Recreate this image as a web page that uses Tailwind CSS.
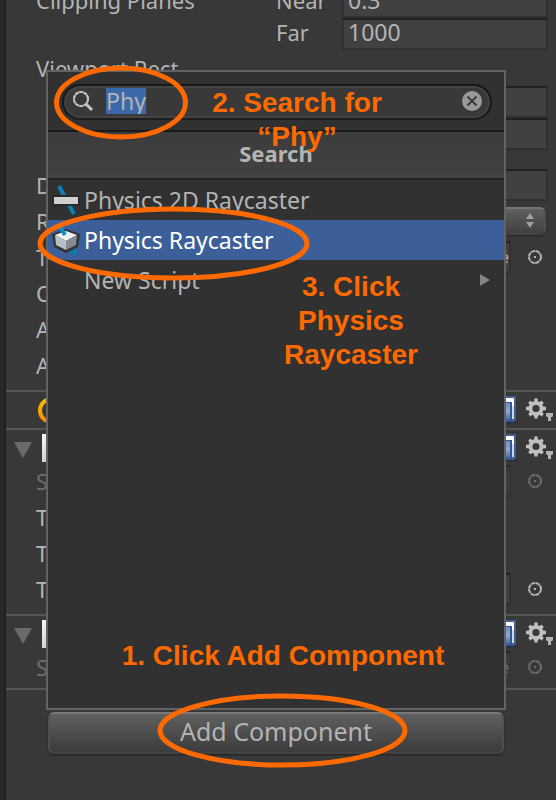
<!DOCTYPE html>
<html lang="en">
<head>
<meta charset="utf-8">
<meta name="viewport" content="width=device-width, initial-scale=1">
<title>Inspector</title>
<script src="https://cdn.jsdelivr.net/npm/@tailwindcss/browser@4"></script>
</head>
<body class="bg-[#383838] text-[#b4b4b4] text-[22px] leading-8 font-['Noto_Sans','Open_Sans',sans-serif]">
<svg class="absolute size-0" aria-hidden="true">
  <defs>
    <linearGradient id="bookFill" x1="0" y1="0" x2="0" y2="1"><stop offset="0" stop-color="#6f8fc0"/><stop offset=".5" stop-color="#8ea9d2"/><stop offset="1" stop-color="#42659f"/></linearGradient>
    <linearGradient id="ringFill" x1="0" y1="0" x2="0" y2="1"><stop offset="0" stop-color="#ffc000"/><stop offset="1" stop-color="#ff8a00"/></linearGradient>
    <linearGradient id="pageFill" x1="0" y1="0" x2="1" y2="1"><stop offset="0" stop-color="#f4f8fb"/><stop offset="1" stop-color="#a9b8c4"/></linearGradient>
    <symbol id="gear" viewBox="0 0 28 24">
      <circle cx="10" cy="10.500" r="5.600" fill="none" stroke="#c0c0c0" stroke-width="4"/>
      <path d="M10 .5v4M10 16.500v4M0 10.500h4M16 10.500h4M3.300 3.800l3 3M13.700 14.200l3 3M16.700 3.800l-3 3M6.300 14.200l-3 3" stroke="#c0c0c0" stroke-width="3.400"/>
      <path d="M20 15h7v3l-1 1h-1v4h-3v-4h-1l-1-1z" fill="#b4b4b4"/>
    </symbol>
    <symbol id="book" viewBox="0 0 28 28">
      <path d="M2 3h26v24H2z" fill="#252b36"/><path d="M2 0h26v24l-2 2H2z" fill="#3f5f96"/>
      <path d="M3 2h23v21h-2V6H3z" fill="#fff"/><path d="M24 10h2v13h-2z" fill="#cfd8e6"/>
      <path d="M3 6h21v20H3z" fill="#36568e"/><path d="M4 7h18v17H4z" fill="url(#bookFill)"/>
    </symbol>
    <symbol id="target" viewBox="0 0 16 16">
      <circle cx="8" cy="8" r="6" fill="none" stroke="currentColor" stroke-width="2" stroke-dasharray="4.200 .512"/>
      <path d="M7 7h2v2H7z" fill="currentColor"/>
    </symbol>
    <symbol id="page" viewBox="0 0 28 28"><path d="M0 0h28v28H0z" fill="url(#pageFill)"/></symbol>
  </defs>
</svg>

<div class="relative flex min-h-screen overflow-hidden">
  <div class="w-1.5 shrink-0 border-r-2 border-[#202020] bg-[#292929]"></div>

  <main class="min-w-0 flex-1">
    <section class="-mt-3.5 pb-[7px] pl-[30px] pr-2">
      <div class="flex h-8 items-center">
        <span class="w-60 pb-1">Clipping Planes</span>
        <label for="near" class="w-[66px] pb-1">Near</label>
        <input id="near" value="0.3" class="h-8 min-w-0 flex-1 border-2 border-[#303030] border-t-[#212121] bg-[#414141] px-1 pb-1 text-[23px] outline-none">
      </div>
      <div class="flex h-8 items-center">
        <label for="far" class="ml-60 w-[66px] pb-1">Far</label>
        <input id="far" value="1000" class="h-8 min-w-0 flex-1 border-2 border-[#303030] border-t-[#212121] bg-[#414141] px-1 pb-1 text-[23px] outline-none">
      </div>
      <div class="flex h-9 items-center">Viewport Rect</div>
      <div class="ml-60 h-8 border-2 border-[#303030] border-t-[#212121] bg-[#414141]"></div>
      <div class="mb-[17px] ml-60 h-8 border-2 border-[#303030] border-t-[#212121] bg-[#414141]"></div>
      <div class="flex h-9 items-center"><label for="depth" class="w-60">Depth</label><input id="depth" class="h-8 min-w-0 flex-1 border-2 border-[#303030] border-t-[#212121] bg-[#414141]"></div>
      <div class="flex h-9 items-center"><span class="w-60">Rendering</span>
        <button aria-label="Rendering path" class="mr-0.5 flex h-7 flex-1 items-center justify-end rounded-md border-2 border-[#505050] border-t-[#757575] border-b-[#434343] bg-linear-to-b from-[#606060] to-[#404040] pr-2 shadow-[0_1px_2px_#222]">
          <svg class="h-4 w-3" viewBox="0 0 12 16" fill="#a0a0a0"><path d="M6 0l4 6H2zM2 9h8l-4 6z"/></svg>
        </button>
      </div>
      <div class="flex h-9 items-center"><span class="w-60">Target</span><div class="h-8 flex-1 border-2 border-[#303030] border-t-[#212121] bg-[#414141] text-right text-base leading-7">e</div><svg class="ml-4 mr-[5px] size-4"><use href="#target"/></svg></div>
      <div class="flex h-9 items-center">Occlusion</div>
      <div class="flex h-9 items-center">Allow HDR</div>
      <div class="flex h-9 items-center">Allow</div>
    </section>

    <section class="flex h-10 items-center border-y-2 border-[#555] pl-8 pr-0.5">
      <svg class="size-[27px]" viewBox="0 0 27 27"><circle cx="13.500" cy="13.500" r="11.500" fill="none" stroke="url(#ringFill)" stroke-width="4"/></svg>
      <svg class="ml-auto mr-2.5 size-7"><use href="#book"/></svg><svg class="h-6 w-7"><use href="#gear"/></svg>
    </section>

    <section class="border-b-2 border-[#555] pb-[7px]">
      <div class="flex h-9 items-center pl-2 pr-0.5">
        <svg class="mr-2.5 mt-1 h-4 w-[18px]" viewBox="0 0 18 16"><path d="M0 0h18L9 16z" fill="#6a6a6a"/></svg>
        <svg class="size-7"><use href="#page"/></svg>
        <svg class="ml-auto mr-2.5 size-7"><use href="#book"/></svg><svg class="h-6 w-7"><use href="#gear"/></svg>
      </div>
      <div class="-mt-[3px] flex h-9 items-center pl-[30px] pr-2 text-[#6e6e6e]"><span class="w-60">Script</span><div class="h-8 flex-1 border-2 border-[#343434] border-t-[#292929] bg-[#3c3c3c]"></div><svg class="ml-4 mr-[5px] size-4"><use href="#target"/></svg></div>
      <div class="flex h-9 items-center pl-[30px]">Time</div>
      <div class="flex h-9 items-center pl-[30px]">Threshold</div>
      <div class="flex h-9 items-center pl-[30px] pr-2"><span class="w-60">Target</span><div class="h-8 flex-1 border-2 border-[#303030] border-t-[#212121] bg-[#414141]"></div><svg class="ml-4 mr-[5px] size-4"><use href="#target"/></svg></div>
    </section>

    <section class="border-b-2 border-[#555] pb-[3px]">
      <div class="flex h-9 items-center pl-2 pr-0.5">
        <svg class="mr-2.5 mt-1 h-4 w-[18px]" viewBox="0 0 18 16"><path d="M0 0h18L9 16z" fill="#6a6a6a"/></svg>
        <svg class="size-7"><use href="#page"/></svg>
        <svg class="ml-auto mr-2.5 size-7"><use href="#book"/></svg><svg class="h-6 w-7"><use href="#gear"/></svg>
      </div>
      <div class="-mt-[3px] flex h-9 items-center pl-[30px] pr-2 text-[#6e6e6e]"><span class="w-60">Script</span><div class="h-8 flex-1 border-2 border-[#343434] border-t-[#292929] bg-[#3c3c3c] text-right text-base leading-7">e</div><svg class="ml-4 mr-[5px] size-4"><use href="#target"/></svg></div>
    </section>

    <div class="pl-[42px] pr-[52px] pt-[22px]">
      <button class="h-[42px] w-full rounded-md border-2 border-[#505050] border-t-[#787878] border-b-[#434343] bg-linear-to-b from-[#606060] to-[#3c3c3c] pb-1 text-[25px] leading-8 shadow-[0_1px_2px_#202020]">Add Component</button>
    </div>
  </main>

  <!-- Component picker -->
  <div class="absolute left-[46px] right-[50px] top-[70px] h-[640px] border-2 border-[#636363] bg-[#313131]">
    <div class="h-[60px] border-b-2 border-[#1a1a1a] pl-3.5 pr-3 pt-3">
      <label class="flex h-9 items-center rounded-full border-2 border-[#181818] border-b-[#1e1e1e] bg-[#393939] px-2 pb-0.5 shadow-[inset_0_0_0_2px_#444]">
        <svg class="mr-3 size-[22px] shrink-0" viewBox="0 0 22 22" fill="none" stroke="#c4c4c4"><circle cx="9" cy="9" r="7" stroke-width="2.200" stroke-dasharray="4 .4"/><path d="M14 14l6 6" stroke-width="3"/></svg>
        <input id="query" aria-label="Search components" value="Phy" class="h-[26px] min-w-0 flex-1 bg-transparent text-[23px] leading-[26px] caret-transparent outline-none selection:bg-[#3d69ae]/99 selection:text-[#b4b4b4]">
        <button aria-label="Clear search"><svg class="size-5" viewBox="0 0 20 20"><circle cx="10" cy="10" r="10" fill="#999"/><path d="M5.500 5.500l9 9M14.500 5.500l-9 9" stroke="#3c3c3c" stroke-width="2"/></svg></button>
      </label>
    </div>
    <h2 class="flex h-12 items-center justify-center border-b-2 border-[#222] bg-linear-to-b from-[#3c3c3c] to-[#424242] pb-1 font-bold">Search</h2>
    <ul class="text-[23px]">
      <li><a href="#" class="flex h-10 items-center pl-1">
        <svg class="mr-1 h-8 w-7 shrink-0" viewBox="0 0 28 32"><path d="M7 2l15 28" stroke="#0b82b5" stroke-width="4"/><path d="M0 11h28v11H0z" fill="#292929"/><path d="M2 13h24v7H2z" fill="#d0d0d0"/></svg>
        Physics 2D Raycaster</a></li>
      <li><a href="#" class="flex h-10 items-center bg-[#3d5f99] pl-1 text-white">
        <svg class="mr-1 h-8 w-7 shrink-0" viewBox="0 0 28 32"><path d="M17 21l7 10" stroke="#087caf" stroke-width="5"/><path d="M0 10l14-5 14 5-2 13-12 6-12-6z" fill="#303437"/><path d="M3 11l11-4 11 4-11 6z" fill="#f0f1f3"/><path d="M3 11l11 6v9L4 21z" fill="#b9c0c7"/><path d="M25 11l-11 6v9l10-5z" fill="#858c94"/><path d="M7 1l6 10" stroke="#0b8fc8" stroke-width="4"/></svg>
        Physics Raycaster</a></li>
      <li><a href="#" class="flex h-10 items-center justify-between pl-9 pr-3.5">New Script
        <svg class="h-3 w-2.5" viewBox="0 0 10 12"><path d="M0 0l10 6-10 6z" fill="#858585"/></svg></a></li>
    </ul>
  </div>

  <!-- Tutorial callouts drawn over the panel -->
  <div class="pointer-events-none absolute inset-0 text-center text-[28px] leading-[34px] font-bold text-[#ff6a00] font-['Liberation_Sans',Arial,sans-serif]">
    <svg class="absolute left-0 top-0 h-[800px] w-[556px]" viewBox="0 0 556 800" fill="none" stroke="#ff6a00" stroke-width="5">
      <ellipse cx="121" cy="102.500" rx="64.500" ry="34.500"/><ellipse cx="173.500" cy="243.500" rx="133.500" ry="34.500"/><ellipse cx="282.500" cy="730.500" rx="122.500" ry="34.500"/>
    </svg>
    <p class="absolute left-[207px] top-[86px] w-[180px]">2. Search for “Phy”</p>
    <p class="absolute left-[281px] top-[270px] w-[140px]">3. Click Physics Raycaster</p>
    <p class="absolute left-[113px] top-[639px] w-[340px]">1. Click Add Component</p>
  </div>
</div>
<script>
  const query = document.getElementById('query');
  query.focus();
  query.select();
</script>
</body>
</html>
